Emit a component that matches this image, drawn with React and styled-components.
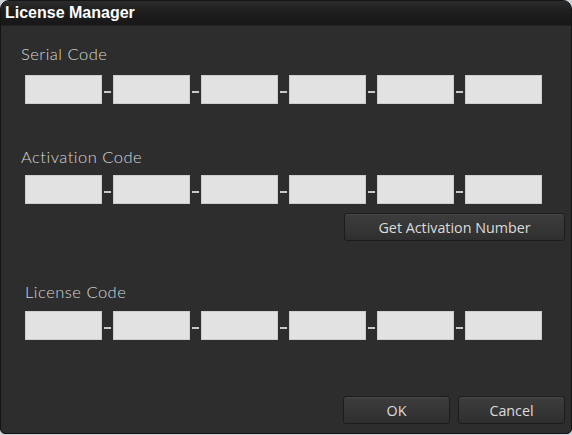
import React from "react";
import styled, { createGlobalStyle } from "styled-components";

const GlobalStyle = createGlobalStyle`
  html, body {
    margin: 0;
    padding: 0;
    background: #cfd2d6;
  }
`;

const Window = styled.div`
  width: 570px;
  height: 432px;
  background: #2d2d2d;
  border: 1px solid #141414;
  border-radius: 9px 9px 5px 5px;
  overflow: hidden;
  display: flex;
  flex-direction: column;
  font-family: "Open Sans", "Liberation Sans", sans-serif;
`;

const TitleBar = styled.div`
  height: 24px;
  flex: none;
  display: flex;
  align-items: center;
  padding-left: 4px;
  background: linear-gradient(#2c2c2c 0%, #1e1e1e 40%, #171717 100%);
  border-bottom: 1px solid #232323;
  color: #ffffff;
  font-family: "Liberation Sans", Arial, sans-serif;
  font-weight: bold;
  font-size: 16px;
`;

const Body = styled.div`
  flex: 1;
  display: flex;
  flex-direction: column;
  padding: 19px 0 0 24px;
`;

const Label = styled.div`
  font-family: Lato, "Open Sans", sans-serif;
  font-weight: 300;
  font-size: 16.5px;
  letter-spacing: 0.5px;
  line-height: 18px;
  color: #d6d6d6;
  margin-left: ${(p) => p.$indent ?? -4}px;
  margin-top: ${(p) => p.$top || 0}px;
`;

const FieldRow = styled.div`
  display: flex;
  align-items: center;
  margin-top: ${(p) => p.$top}px;
`;

const CodeInput = styled.input`
  box-sizing: border-box;
  width: 77px;
  height: 29px;
  margin: 0;
  padding: 0 4px;
  background: #e2e2e2;
  border: 1px solid #cdcdcd;
  border-radius: 0;
  outline: none;
  font-size: 13px;
`;

const Dash = styled.span`
  width: 7px;
  height: 2px;
  margin: 4px 2px 0;
  background: #c9c9c9;
`;

const Button = styled.button`
  box-sizing: border-box;
  width: ${(p) => p.$w}px;
  height: 28px;
  padding: 0;
  background: linear-gradient(#3d3d3d, #2f2f2f);
  border: 1px solid #1c1c1c;
  border-radius: 3px;
  box-shadow: inset 0 1px 0 #474747;
  color: #dcdcdc;
  font-family: "Open Sans", "Liberation Sans", sans-serif;
  font-size: 14.3px;
  cursor: pointer;
`;

const ButtonRow = styled.div`
  display: flex;
  justify-content: flex-end;
  gap: 8px;
  padding-right: 6px;
  margin-top: ${(p) => p.$top}px;
`;

const CodeFields = ({ top }) => (
  <FieldRow $top={top}>
    {[0, 1, 2, 3, 4, 5].map((i) => (
      <React.Fragment key={i}>
        {i > 0 && <Dash />}
        <CodeInput />
      </React.Fragment>
    ))}
  </FieldRow>
);

export default function App() {
  return (
    <>
      <GlobalStyle />
      <Window>
        <TitleBar>License Manager</TitleBar>
        <Body>
          <Label $top={0}>Serial Code</Label>
          <CodeFields top={12} />
          <Label $top={44}>Activation Code</Label>
          <CodeFields top={9} />
          <ButtonRow $top={9}>
            <Button $w={221}>Get Activation Number</Button>
          </ButtonRow>
          <Label $top={42} $indent={0}>
            License Code
          </Label>
          <CodeFields top={10} />
          <ButtonRow $top={56}>
            <Button $w={107}>OK</Button>
            <Button $w={107}>Cancel</Button>
          </ButtonRow>
        </Body>
      </Window>
    </>
  );
}
